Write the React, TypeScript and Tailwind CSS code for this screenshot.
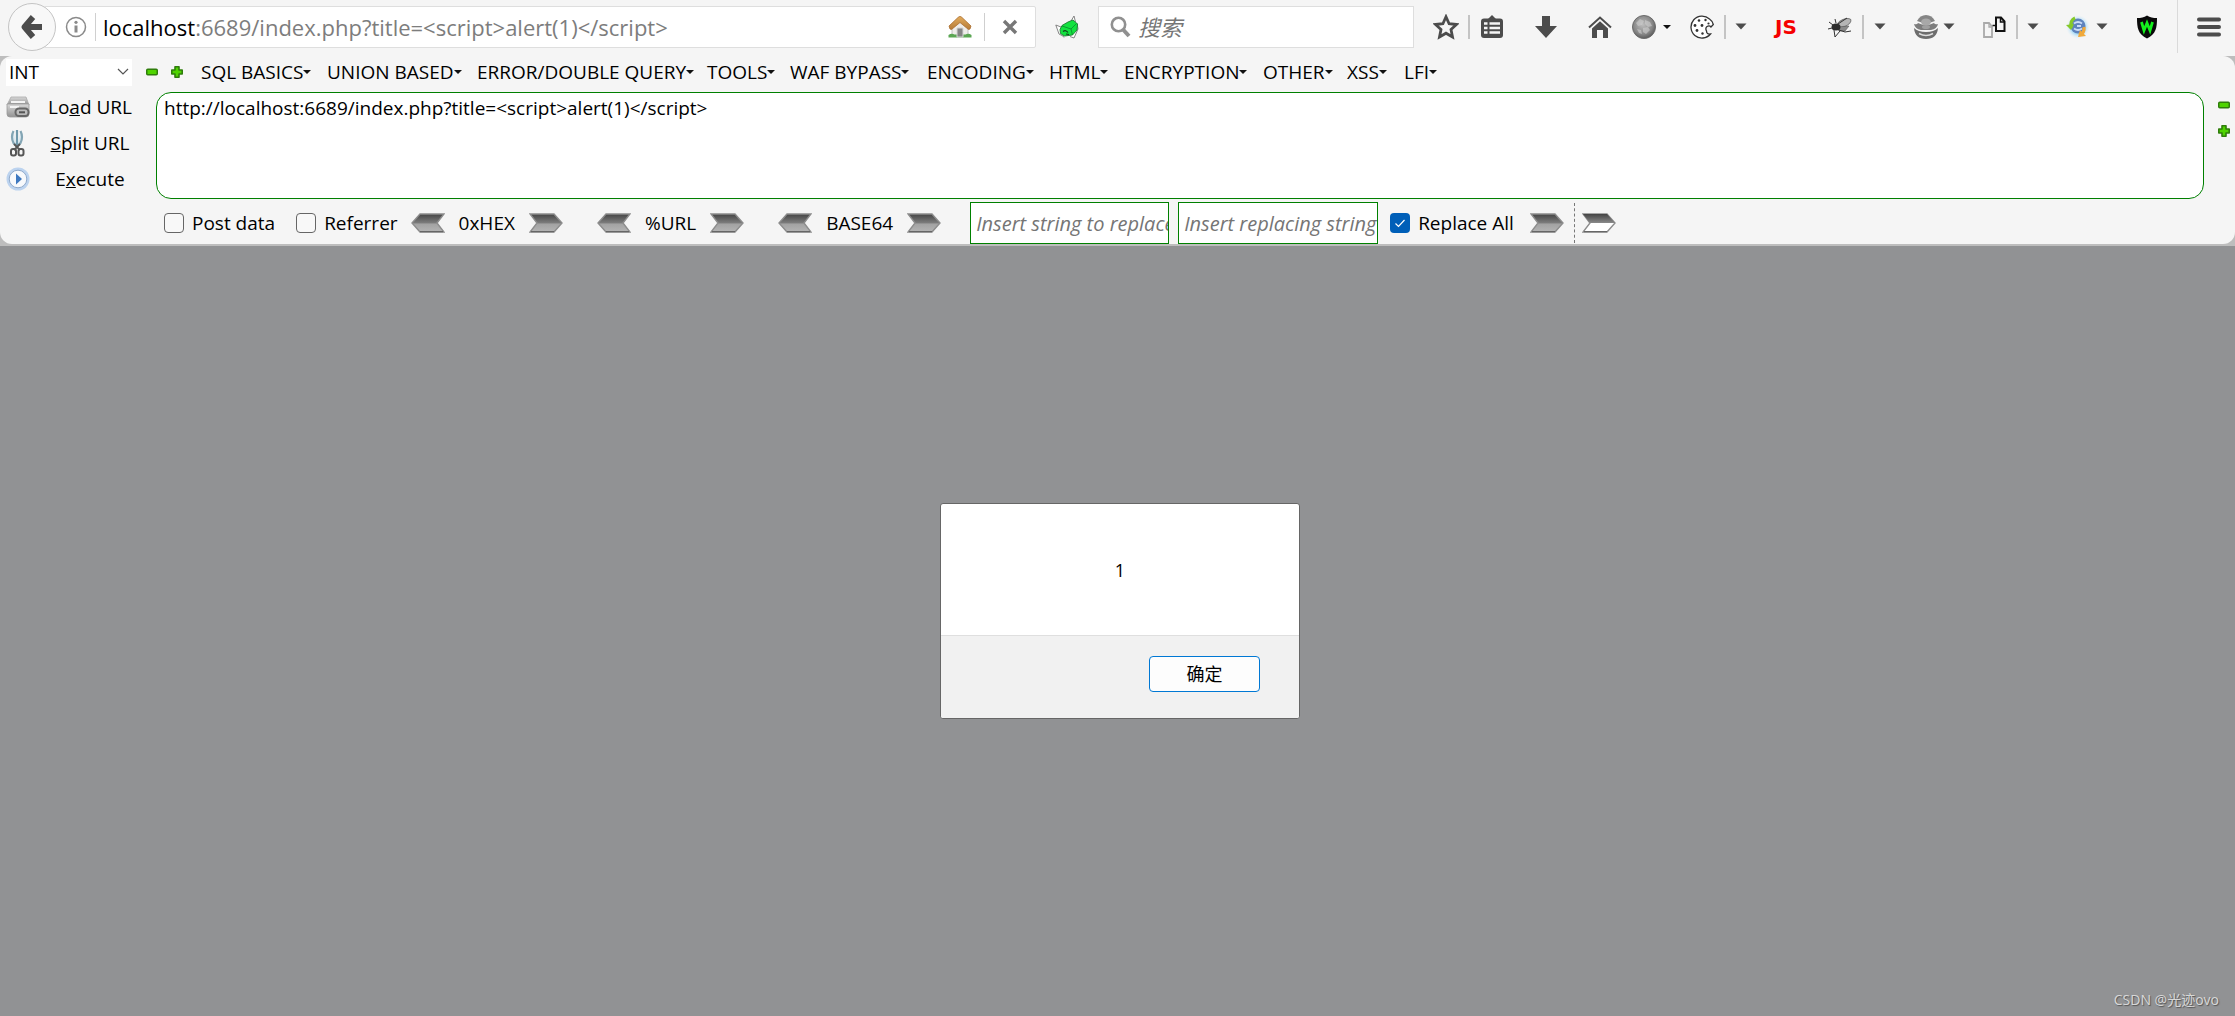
import type { ReactNode } from "react";

const menus = [
  { label: "SQL BASICS", width: "w-[126px]" },
  { label: "UNION BASED", width: "w-[150px]" },
  { label: "ERROR/DOUBLE QUERY", width: "w-[230px]" },
  { label: "TOOLS", width: "w-[83px]" },
  { label: "WAF BYPASS", width: "w-[137px]" },
  { label: "ENCODING", width: "w-[122px]" },
  { label: "HTML", width: "w-[75px]" },
  { label: "ENCRYPTION", width: "w-[139px]" },
  { label: "OTHER", width: "w-[84px]" },
  { label: "XSS", width: "w-[57px]" },
  { label: "LFI", width: "w-[57px]" },
];

function IconButton({ label, className = "", children }: { label: string; className?: string; children: ReactNode }) {
  return (
    <button type="button" aria-label={label} className={`flex shrink-0 items-center justify-center ${className}`}>
      {children}
    </button>
  );
}

function Caret({ small = false }: { small?: boolean }) {
  return small ? (
    <svg width="8" height="4" viewBox="0 0 8 4" className="shrink-0">
      <path d="M0 0h8L4 4z" fill="#111" />
    </svg>
  ) : (
    <svg width="12" height="7" viewBox="0 0 12 7" className="shrink-0">
      <path d="M0.5 0.5h11L6 6.5z" fill="#4c4c4c" />
    </svg>
  );
}

function Separator({ className = "" }: { className?: string }) {
  return <span className={`h-6 w-[2px] shrink-0 bg-[#c4c4c4] ${className}`} />;
}

function Minus() {
  return (
    <svg width="12" height="12" viewBox="0 0 12 12">
      <rect x="0.75" y="3.25" width="10.5" height="5.5" rx="1" fill="#4fd400" stroke="#2f7d0b" strokeWidth="1.5" />
    </svg>
  );
}

function Plus() {
  return (
    <svg width="12" height="12" viewBox="0 0 12 12">
      <path
        d="M4 0.8h4v3.200h3.200v4H8v3.200H4V8H0.8V4H4z"
        fill="#4fd400"
        stroke="#2f7d0b"
        strokeWidth="1.6"
        strokeLinejoin="round"
      />
    </svg>
  );
}

function Chevron({ direction = "right", hollow = false }: { direction?: "left" | "right"; hollow?: boolean }) {
  return (
    <svg width="34" height="20" viewBox="0 0 34 20" className={direction === "left" ? "-scale-x-100" : ""}>
      <path d="M1 1h24l8 9-8 9H1l7-9z" fill={hollow ? "#fff" : "url(#steel)"} stroke="#8c8c8c" strokeWidth="1.4" />
      {hollow && <path d="M1 1h24l8 9H8z" fill="url(#steelTop)" />}
      <path d="M2 18.6h23" stroke="#666" strokeWidth="1.2" />
    </svg>
  );
}

function Gradients() {
  return (
    <svg width="0" height="0" className="absolute" aria-hidden="true">
      <defs>
        <linearGradient id="steel" x1="0" y1="0" x2="0" y2="1">
          <stop offset="0" stopColor="#444" />
          <stop offset="0.5" stopColor="#7d7d7d" />
          <stop offset="0.55" stopColor="#a2a2a2" />
          <stop offset="1" stopColor="#b4b4b4" />
        </linearGradient>
        <linearGradient id="steelTop" x1="0" y1="0" x2="0" y2="1">
          <stop offset="0" stopColor="#444" />
          <stop offset="1" stopColor="#8a8a8a" />
        </linearGradient>
        <radialGradient id="globe" cx="0.45" cy="0.4" r="0.6">
          <stop offset="0" stopColor="#bdbdbd" />
          <stop offset="0.7" stopColor="#868686" />
          <stop offset="1" stopColor="#5c5c5c" />
        </radialGradient>
        <linearGradient id="roof" x1="0" y1="0" x2="0" y2="1">
          <stop offset="0" stopColor="#e3ac5c" />
          <stop offset="1" stopColor="#b57a38" />
        </linearGradient>
        <linearGradient id="metal" x1="0" y1="0" x2="0" y2="1">
          <stop offset="0" stopColor="#d8d8d8" />
          <stop offset="1" stopColor="#929292" />
        </linearGradient>
        <radialGradient id="halo">
          <stop offset="0.5" stopColor="#8fd0f5" />
          <stop offset="1" stopColor="#dff2fc" stopOpacity="0" />
        </radialGradient>
      </defs>
    </svg>
  );
}

function NavigationBar() {
  return (
    <nav aria-label="Navigation" className="flex h-14 items-center bg-[#f5f5f5] pb-[3px] pl-2 pr-[14px]">
      <IconButton label="Back" className="relative z-10 h-12 w-12 rounded-full border border-[#c4c4c4] bg-[#f8f8f8]">
        <svg width="22" height="24" viewBox="0 0 22 24">
          <path d="M12 2 3.500 12 12 22M4 12h17" fill="none" stroke="#4c4c4c" strokeWidth="5.800" strokeLinejoin="round" />
        </svg>
      </IconButton>
      <div className="-ml-3 flex h-[42px] min-w-0 flex-1 items-center rounded-[2px] border border-[#dedede] bg-white pl-5">
        <IconButton label="Site information">
          <svg width="22" height="22" viewBox="0 0 22 22">
            <circle cx="11" cy="11" r="9.500" fill="none" stroke="#8a8a8a" strokeWidth="1.500" />
            <path d="M11 9.500v7" stroke="#8a8a8a" strokeWidth="3" />
            <circle cx="11" cy="6.300" r="1.600" fill="#8a8a8a" />
          </svg>
        </IconButton>
        <span className="ml-2 h-7 w-px bg-[#d0d0d0]" />
        <div
          role="textbox"
          aria-label="Address"
          contentEditable
          suppressContentEditableWarning
          className="ml-[7px] min-w-0 flex-1 truncate text-[22px] leading-7 text-[#7d7d7d] outline-none"
        >
          <span className="text-black">localhost</span>
          {":6689/index.php?title=<script>alert(1)</script>"}
        </div>
        <IconButton label="Home site">
          <svg width="24" height="24" viewBox="0 0 24 24">
            <path d="M4 10l8-6 8 6v11H4z" fill="#efedea" stroke="#b5b5b5" strokeWidth="0.8" />
            <path d="M0.500 20q3-2 6-.5h11q3-1.500 6 .5v2.500H0.500z" fill="#5ba653" />
            <path d="M9 13h6v9H9z" fill="#858585" stroke="#d5d5d5" />
            <path d="M12 1.500q1 0 2 1L23 11l-1 3-1.500.5L12 7.500 3.500 14.500 2 14l-1-3 9-8.500q1-1 2-1z" fill="url(#roof)" stroke="#ab6d2e" strokeWidth="0.8" />
          </svg>
        </IconButton>
        <span className="ml-3 h-7 w-px bg-[#cfcfcf]" />
        <IconButton label="Stop" className="mx-[17px]">
          <svg width="16" height="16" viewBox="0 0 16 16">
            <path d="M2 2l12 12M14 2 2 14" stroke="#777" strokeWidth="3.400" />
          </svg>
        </IconButton>
      </div>
      <IconButton label="Fox" className="ml-[19px]">
        <svg width="24" height="24" viewBox="0 0 24 24">
          <path
            d="M6 12 .8 10 4 19l4 2 1 1.500M16 6l3-5 1.500 6M22 8l1 6-4 9-4-1.500"
            fill="#fff"
            stroke="#777"
            strokeWidth="0.900"
          />
          <path d="M7 10.500l6-3.500 5-2 4.500 4-.5 6-4.500 5-8 1-4-2.500-.5-4z" fill="#12e23f" stroke="#1d7a31" strokeWidth="0.900" />
          <path d="M21.500 8.500 16 14l1.500 6M7 11l9 3" fill="none" stroke="#0c9a30" strokeWidth="1" />
          <path d="M8 16.500q3-2 5 1M11 19l3 .5" fill="none" stroke="#123f1c" strokeWidth="1.200" />
        </svg>
      </IconButton>
      <form className="ml-[19px] flex h-[42px] w-[316px] items-center border border-[#dedede] bg-white pl-[11px]">
        <svg width="21" height="22" viewBox="0 0 21 22" className="shrink-0">
          <circle cx="8.500" cy="8.500" r="6.700" fill="none" stroke="#909090" strokeWidth="2.600" />
          <path d="M13 13.500l6 6.500" stroke="#909090" strokeWidth="4" />
        </svg>
        <input
          type="text"
          aria-label="搜索"
          placeholder="搜索"
          className="ml-[7px] min-w-0 flex-1 text-[22px] italic outline-none placeholder:text-[#767676]"
        />
      </form>
      <IconButton label="Bookmark" className="ml-[19px]">
        <svg width="26" height="26" viewBox="0 0 26 26">
          <path
            d="M13 2.800l3.100 6.900 7.400.8-5.500 5 1.500 7.500-6.500-3.800L6.500 23 8 15.500l-5.500-5 7.400-.8z"
            fill="none"
            stroke="#4c4c4c"
            strokeWidth="2.800"
          />
        </svg>
      </IconButton>
      <Separator className="ml-[9px]" />
      <IconButton label="Bookmarks list" className="ml-[10px]">
        <svg width="24" height="24" viewBox="0 0 24 24">
          <path d="M8 4l4-4 4 4z" fill="#4c4c4c" />
          <rect x="1" y="3.500" width="22" height="19.500" rx="3" fill="#4c4c4c" />
          <path d="M4 8.500h3.500M4 13h3.500M4 17.500h3.500M9.500 8.500H20M9.500 13H20M9.500 17.500H20" stroke="#f5f5f5" strokeWidth="2.600" />
        </svg>
      </IconButton>
      <IconButton label="Downloads" className="ml-[30px]">
        <svg width="24" height="24" viewBox="0 0 24 24">
          <path d="M8 1h8v10h7L12 23 1 11h7z" fill="#4c4c4c" />
        </svg>
      </IconButton>
      <IconButton label="Home" className="ml-[30px]">
        <svg width="24" height="24" viewBox="0 0 24 24">
          <path d="M1 12.500 12 2.500l11 10" fill="none" stroke="#4c4c4c" strokeWidth="2" />
          <path d="M4 13.500l8-7.300 8 7.300V23h-5v-8H9v8H4z" fill="#4c4c4c" />
        </svg>
      </IconButton>
      <IconButton label="Proxy" className="ml-5 gap-[7px]">
        <svg width="24" height="24" viewBox="0 0 24 24">
          <circle cx="12" cy="12" r="11.500" fill="url(#globe)" stroke="#6b6b6b" />
          <path d="M4 8l4-4 4 2-2 4-4 1zM13 5l5 2 2 4-4 1-3-3zM11 13l5-1 2 3-4 4-3-2zM5 14l4 1 1 4-3-1z" fill="#cfcfcf" opacity=".6" />
        </svg>
        <Caret small />
      </IconButton>
      <IconButton label="Cookies" className="ml-[19px]">
        <svg width="24" height="24" viewBox="0 0 24 24">
          <path
            d="M19.500 4A11 11 0 1 0 20.500 19q-4 .5-4-3 -1.500-3 .5-4.500 2.500-1.500 4 .5l2.300-2.500Q22.500 6 19.500 4z"
            fill="#fff"
            stroke="#333"
            strokeWidth="1.300"
          />
          <g fill="#333">
            <circle cx="9" cy="5.500" r="1.300" />
            <circle cx="15.500" cy="5" r="1.200" />
            <circle cx="5" cy="10.500" r="1.400" />
            <circle cx="12" cy="10.500" r="1.400" />
            <circle cx="7" cy="15.500" r="1.400" />
            <circle cx="18.500" cy="8.500" r="1.100" />
            <circle cx="12.500" cy="18.500" r="1.200" />
          </g>
        </svg>
      </IconButton>
      <Separator className="ml-[10px]" />
      <IconButton label="Cookie options" className="ml-[9px]">
        <Caret />
      </IconButton>
      <IconButton
        label="JavaScript"
        className="ml-[27px] w-6 font-['DejaVu_Sans'] text-[20px] font-bold leading-6 text-[#f50000]"
      >
        JS
      </IconButton>
      <IconButton label="Firebug" className="ml-[30px]">
        <svg width="24" height="24" viewBox="0 0 24 24">
          <ellipse cx="16" cy="8" rx="7.500" ry="3.500" transform="rotate(-25 16 8)" fill="#b5b5b5" stroke="#777" />
          <path d="M9 12l12-1-4 5-6 0z" fill="#8a8a8a" stroke="#555" strokeWidth="0.600" />
          <ellipse cx="8" cy="12" rx="4.500" ry="3.500" fill="#2e2e2e" />
          <path d="M5 10 1 7M4 13l-4 1M6 15l1 7 5-6M11 15l6 2 6-1M8 8 7 4M10 9l9-6" fill="none" stroke="#333" strokeWidth="1" />
        </svg>
      </IconButton>
      <Separator className="ml-[10px]" />
      <IconButton label="Firebug options" className="ml-[10px]">
        <Caret />
      </IconButton>
      <IconButton label="User agent" className="ml-7 gap-[5px]">
        <svg width="24" height="24" viewBox="0 0 24 24">
          <path d="M3 6q3-6 9-6t9 6q-9 4-18 0z" fill="#858585" />
          <path d="M0 9q3 1 4-1 8 4 16 0 1 2 4 1-1 5-7 6h-10q-6-1-7-6z" fill="#7d7d7d" />
          <ellipse cx="12" cy="7" rx="5" ry="3.500" fill="#a8a8a8" />
          <ellipse cx="12" cy="12" rx="4" ry="2" fill="#9f9f9f" />
          <path d="M0 13q4 4 12 4t12-4q-1 11-12 11T0 13z" fill="#6d6d6d" />
          <path d="M5 18.500q7 4 14 0" fill="none" stroke="#dedede" strokeWidth="1.500" />
        </svg>
        <Caret />
      </IconButton>
      <IconButton label="Page compare" className="ml-[27px]">
        <svg width="24" height="24" viewBox="0 0 24 24">
          <path d="M2 8h5l3 3.500V22H2z" fill="#f5f5f5" stroke="#aaa" strokeWidth="1.800" />
          <path d="M7 8v4h3" fill="none" stroke="#aaa" strokeWidth="1.300" />
          <path d="M14 2.500h5l3.500 4V16H14z" fill="#f5f5f5" stroke="#111" strokeWidth="2" />
          <path d="M18.500 3v4h4M10.500 10.500H14" fill="none" stroke="#111" strokeWidth="1.500" />
        </svg>
      </IconButton>
      <Separator className="ml-[10px]" />
      <IconButton label="Compare options" className="ml-[9px]">
        <Caret />
      </IconButton>
      <IconButton label="Sync" className="ml-[27px] gap-[6px]">
        <svg width="24" height="24" viewBox="0 0 24 24">
          <circle cx="12" cy="12" r="12" fill="url(#halo)" />
          <circle cx="12" cy="11" r="7.500" fill="#5f83bd" />
          <path d="M8 8.500q4-3 8 0M8 13.500q4 3 8 0M11 11h4" fill="none" stroke="#c9dcf8" strokeWidth="1.800" />
          <path d="M9 3Q4 5 5 13" fill="none" stroke="#86c928" strokeWidth="3.200" />
          <path d="M0 10l8-1-3 6z" fill="#86c928" />
          <path d="M13 20q6-2 5-8" fill="none" stroke="#f0a93b" strokeWidth="3.200" />
          <path d="M14 15l-2 7 8-1z" fill="#f0a93b" />
        </svg>
        <Caret />
      </IconButton>
      <IconButton label="Wappalyzer" className="ml-[27px]">
        <svg width="24" height="24" viewBox="0 0 24 24">
          <path d="M12 .5c3 2 6 2.500 10 2.500 0 10-1 16-10 20.500C3 19 2 13 2 3c4 0 7-.5 10-2.500z" fill="#0a0a0a" />
          <path d="M6.500 7l2.500 8.500L12 8l3 7.500L17.500 7" fill="none" stroke="#14f21d" strokeWidth="2.800" />
        </svg>
      </IconButton>
      <span className="ml-[18px] h-[53px] w-px shrink-0 bg-[#dadada]" />
      <IconButton label="Menu" className="ml-[19px]">
        <svg width="24" height="24" viewBox="0 0 24 24">
          <path d="M2 4.500h20M2 12h20M2 19.500h20" stroke="#4c4c4c" strokeWidth="4" strokeLinecap="round" />
        </svg>
      </IconButton>
    </nav>
  );
}

function Codec({ label, className }: { label: string; className: string }) {
  return (
    <div className={`flex shrink-0 items-center ${className}`}>
      <IconButton label={`Decode ${label}`}>
        <Chevron direction="left" />
      </IconButton>
      <span className="mx-[14px]">{label}</span>
      <IconButton label={`Encode ${label}`}>
        <Chevron />
      </IconButton>
    </div>
  );
}

function Check({ id, label }: { id: string; label: string }) {
  return (
    <div className="flex shrink-0 items-center gap-2">
      <input id={id} type="checkbox" className="h-5 w-5 appearance-none rounded-[4px] border border-[#666] bg-[#f8f8f8]" />
      <label htmlFor={id}>{label}</label>
    </div>
  );
}

function HackBar() {
  return (
    <section aria-label="HackBar" className="bg-[#bdbdbd] pb-[2px]">
      <div className="rounded-xl bg-[#f5f5f5]">
        <div className="flex h-8 items-center">
          <div className="relative ml-[6px] h-[27px] w-[126px] shrink-0 bg-white">
            <select aria-label="Injection type" className="h-full w-full appearance-none pl-[3px] leading-6 outline-none">
              <option>INT</option>
            </select>
            <svg width="12" height="8" viewBox="0 0 12 8" className="pointer-events-none absolute right-[3px] top-[9px]">
              <path d="M1 1l5 5 5-5" fill="none" stroke="#555" strokeWidth="1.200" />
            </svg>
          </div>
          <IconButton label="Remove" className="ml-[14px]">
            <Minus />
          </IconButton>
          <IconButton label="Add" className="ml-[13px]">
            <Plus />
          </IconButton>
          <div className="ml-[18px] flex">
            {menus.map((menu) => (
              <button key={menu.label} type="button" className={`flex shrink-0 items-center whitespace-nowrap ${menu.width}`}>
                {menu.label}
                <Caret small />
              </button>
            ))}
          </div>
        </div>

        <div className="flex">
          <div className="flex w-[156px] shrink-0 flex-col pl-[6px] pr-[6px] pt-px">
            <button type="button" className="flex h-9 items-center">
              <svg width="24" height="24" viewBox="0 0 24 24">
                <path d="M5 2h15l3 8H1z" fill="url(#metal)" stroke="#aaa" strokeWidth="0.800" />
                <path d="M1 9h22v10q0 3-3 3H4q-3 0-3-3z" fill="url(#metal)" stroke="#999" strokeWidth="0.800" />
                <path d="M5 7h14M4 12h9" stroke="#f3f3f3" strokeWidth="1.800" />
                <rect x="9.500" y="13.500" width="13" height="7.500" rx="3.500" fill="#bbb" stroke="#666" strokeWidth="2" />
                <path d="M13 17.300h6" stroke="#555" strokeWidth="2" />
              </svg>
              <span className="flex-1">Lo<u>a</u>d URL</span>
            </button>
            <button type="button" className="flex h-9 items-center">
              <svg width="24" height="28" viewBox="0 0 24 28">
                <path d="M7.500 2q-3 6 0 12l3 3M14.500 2q3 6 0 12l-3 3" fill="#dcebf2" stroke="#83a5b4" strokeWidth="2.200" />
                <path d="M11 1v15" stroke="#6f98aa" strokeWidth="2.200" />
                <path d="M8 15l6 6M14 15l-6 6" stroke="#555" strokeWidth="1.800" />
                <rect x="5" y="20" width="5" height="6.500" rx="2" fill="none" stroke="#555" strokeWidth="2" />
                <rect x="12.500" y="20" width="5" height="6.500" rx="2" fill="none" stroke="#555" strokeWidth="2" />
              </svg>
              <span className="flex-1"><u>S</u>plit URL</span>
            </button>
            <button type="button" className="flex h-9 items-center">
              <svg width="24" height="24" viewBox="0 0 24 24">
                <circle cx="12" cy="12" r="11.500" fill="#bcd3ef" />
                <circle cx="12" cy="12" r="8.800" fill="#f7f9fc" stroke="#90aacb" />
                <path d="M10 6.500l6 5.500-6 5.500z" fill="#3d78c0" />
              </svg>
              <span className="flex-1">E<u>x</u>ecute</span>
            </button>
          </div>
          <textarea
            aria-label="URL"
            spellCheck={false}
            defaultValue="http://localhost:6689/index.php?title=<script>alert(1)</script>"
            className="mt-1 h-[107px] min-w-0 flex-1 resize-none rounded-[15px] border border-[#008000] bg-white px-[7px] py-[3px] leading-6 outline-none"
          />
          <div className="flex w-[31px] shrink-0 flex-col items-center gap-[14px] pl-2 pt-[11px]">
            <IconButton label="Shrink">
              <Minus />
            </IconButton>
            <IconButton label="Expand">
              <Plus />
            </IconButton>
          </div>
        </div>

        <div className="flex items-center pl-[164px] pt-[3px]">
          <Check id="post-data" label="Post data" />
          <div className="ml-[21px]">
            <Check id="referrer" label="Referrer" />
          </div>
          <Codec label="0xHEX" className="ml-[13px]" />
          <Codec label="%URL" className="ml-[34px]" />
          <Codec label="BASE64" className="ml-[34px]" />
          <input
            type="text"
            aria-label="String to replace"
            placeholder="Insert string to replace"
            className="ml-[29px] h-[42px] w-[199px] shrink-0 border border-[#008000] bg-white pl-[5px] text-[20px] italic outline-none placeholder:text-[#757575]"
          />
          <input
            type="text"
            aria-label="Replacing string"
            placeholder="Insert replacing string"
            className="ml-[9px] h-[42px] w-[200px] shrink-0 border border-[#008000] bg-white pl-[5px] text-[20px] italic outline-none placeholder:text-[#757575]"
          />
          <div className="ml-3 flex shrink-0 items-center gap-2">
            <span className="relative flex h-5 w-5">
              <input id="replace-all" type="checkbox" defaultChecked className="h-5 w-5 appearance-none rounded-[4px] bg-[#005fb8]" />
              <svg width="20" height="20" viewBox="0 0 20 20" className="pointer-events-none absolute inset-0">
                <path d="M5.500 10.500l3 3 6-6.500" fill="none" stroke="#fff" strokeWidth="1.200" />
              </svg>
            </span>
            <label htmlFor="replace-all">Replace All</label>
          </div>
          <IconButton label="Replace" className="ml-4">
            <Chevron />
          </IconButton>
          <span className="ml-[10px] h-10 border-l border-dashed border-[#777]" />
          <IconButton label="Replace and execute" className="ml-[7px]">
            <Chevron hollow />
          </IconButton>
        </div>
      </div>
    </section>
  );
}

export default function App() {
  return (
    <div className="flex min-h-screen flex-col bg-[#919294] font-['Open_Sans','Noto_Sans_CJK_SC',sans-serif] text-[19px] leading-6 text-black">
      <Gradients />
      <NavigationBar />
      <HackBar />
      <main className="flex flex-1 flex-col items-center justify-between pt-[257px]">
        <div role="alertdialog" aria-labelledby="message" className="ml-[5px] w-[360px] overflow-hidden rounded-[3px] border border-[#666] bg-white">
          <p id="message" className="flex h-[131px] items-center justify-center text-[18px]">1</p>
          <div className="flex h-[83px] items-start justify-end border-t border-[#dfdfdf] bg-[#f1f1f1] pr-[39px] pt-5">
            <button type="button" className="h-9 w-[111px] rounded-[4px] border border-[#0078d4] bg-[#fdfdfd] text-[18px]">
              确定
            </button>
          </div>
        </div>
        <footer className="mr-4 self-end pb-1 text-[14px] text-[#d8d8d8] [text-shadow:1px_1px_1px_#555]">
          CSDN @光迹ovo
        </footer>
      </main>
    </div>
  );
}
